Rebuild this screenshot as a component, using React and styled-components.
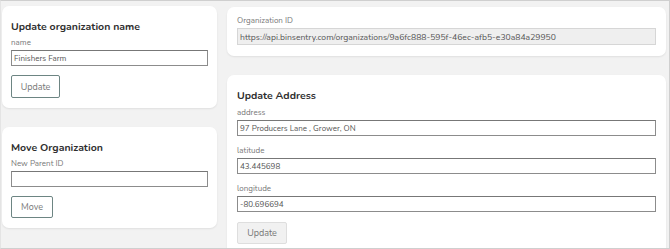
import React from "react";
import styled, { createGlobalStyle } from "styled-components";

const Global = createGlobalStyle`
  html, body { margin: 0; padding: 0; background: #ffffff; }
  * { box-sizing: border-box; }
`;

const Frame = styled.div`
  width: 670px;
  height: 249px;
  overflow: hidden;
  background: #f2f2f2;
  border: 1px solid #cfcfcf;
  border-left-color: #e4e4e4;
  padding: 5px 2px 0 1px;
  display: grid;
  grid-template-columns: 215px 439px;
  column-gap: 10px;
  font-family: "Nunito", Lato, "Open Sans", sans-serif;
`;

const Column = styled.div`
  display: flex;
  flex-direction: column;
  gap: ${(p) => p.$gap}px;
  padding-top: ${(p) => p.$top || 0}px;
`;

const Card = styled.div`
  background: #ffffff;
  border-radius: 7px;
  box-shadow: 0 1px 2px rgba(0, 0, 0, 0.08);
  padding: ${(p) => p.$pad};
  display: flex;
  flex-direction: column;
`;

const Title = styled.h2`
  margin: 0 0 ${(p) => p.$mb || 4}px;
  font-size: 10.5px;
  line-height: 14px;
  font-weight: 700;
  color: #2e2e2e;
`;

const Field = styled.div`
  display: flex;
  flex-direction: column;
  gap: 2px;
  margin-bottom: ${(p) => p.$mb}px;
`;

const Label = styled.label`
  font-size: 8px;
  line-height: 10px;
  color: #777;
`;

const Input = styled.div`
  height: ${(p) => p.$h || 16}px;
  border: 1px solid #8c8c8c;
  border-top-color: #777;
  background: ${(p) => (p.$readonly ? "#efefef" : "#fff")};
  ${(p) => p.$readonly && "border-color: #d6d6d6;"}
  font-size: ${(p) => (p.$readonly ? 8.6 : 8)}px;
  color: #555;
  padding: 0 2px;
  display: flex;
  align-items: center;
  white-space: nowrap;
  overflow: hidden;
`;

const Button = styled.button`
  align-self: flex-start;
  width: ${(p) => p.$w}px;
  height: ${(p) => p.$h}px;
  font-family: inherit;
  font-size: 9px;
  color: #777;
  padding: 0;
  border-radius: 2px;
  cursor: pointer;
  background: ${(p) => (p.$plain ? "#f1f1f1" : "#fff")};
  border: 1px solid ${(p) => (p.$plain ? "#dedede" : "#6d8583")};
`;

export default function App() {
  return (
    <>
      <Global />
      <Frame>
        <Column $gap={19}>
          <Card $pad="14px 9px 10px">
            <Title>Update organization name</Title>
            <Field $mb={9}>
              <Label>name</Label>
              <Input>Finishers Farm</Input>
            </Field>
            <Button $w={49} $h={23}>Update</Button>
          </Card>
          <Card $pad="14px 9px 10px">
            <Title>Move Organization</Title>
            <Field $mb={9}>
              <Label>New Parent ID</Label>
              <Input />
            </Field>
            <Button $w={42} $h={22}>Move</Button>
          </Card>
        </Column>
        <Column $gap={19} $top={1}>
          <Card $pad="9px 10px 11px">
            <Field $mb={0}>
              <Label>Organization ID</Label>
              <Input $readonly $h={17}>
                https://api.binsentry.com/organizations/9a6fc888-595f-46ec-afb5-e30a84a29950
              </Input>
            </Field>
          </Card>
          <Card $pad="14px 10px 10px">
            <Title $mb={5}>Update Address</Title>
            <Field $mb={10}>
              <Label>address</Label>
              <Input>97 Producers Lane , Grower, ON</Input>
            </Field>
            <Field $mb={10}>
              <Label>latitude</Label>
              <Input>43.445698</Input>
            </Field>
            <Field $mb={10}>
              <Label>longitude</Label>
              <Input>-80.696694</Input>
            </Field>
            <Button $plain $w={50} $h={22}>Update</Button>
          </Card>
        </Column>
      </Frame>
    </>
  );
}
